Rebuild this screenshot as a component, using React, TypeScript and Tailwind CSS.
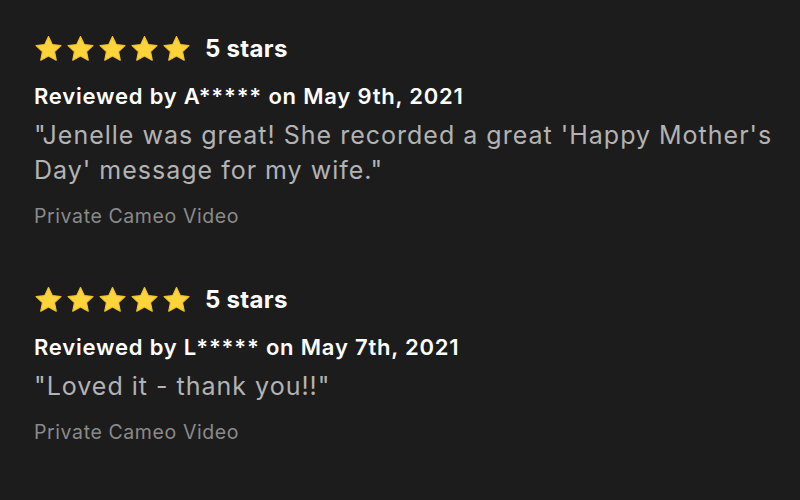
import { Fragment } from "react";

type Review = {
  rating: number;
  author: string;
  date: string;
  text: string;
  kind: string;
};

const reviews: Review[] = [
  {
    rating: 5,
    author: "A*****",
    date: "May 9th, 2021",
    text: "\"Jenelle was great! She recorded a great 'Happy Mother's Day' message for my wife.\"",
    kind: "Private Cameo Video",
  },
  {
    rating: 5,
    author: "L*****",
    date: "May 7th, 2021",
    text: "\"Loved it - thank you!!\"",
    kind: "Private Cameo Video",
  },
];

function Star() {
  return (
    <svg width="29" height="28" viewBox="0 0 24 23" className="shrink-0">
      <path
        d="M12 1.2l3.1 6.6 7.2.9-5.3 5 1.4 7.1L12 17.3l-6.4 3.5 1.4-7.1-5.3-5 7.2-.9z"
        fill="#ffd43b"
        stroke="#f2c12e"
        strokeWidth="1"
        strokeLinejoin="round"
      />
    </svg>
  );
}

export default function App() {
  return (
    <div
      className="w-[800px] h-[500px] bg-[#1c1c1c] pl-[34px] pt-[35px] overflow-hidden"
      style={{ fontFamily: "Inter, 'Open Sans', sans-serif" }}
    >
      {reviews.map((r, i) => (
        <Fragment key={i}>
          <div className={i > 0 ? "mt-[58px]" : ""}>
            <div className="flex items-center h-[28px]">
              <div className="flex gap-[3px]">
                {Array.from({ length: r.rating }).map((_, j) => (
                  <Star key={j} />
                ))}
              </div>
              <span className="ml-[14px] text-[24px] font-bold text-white leading-none tracking-[0.3px]">
                {r.rating} stars
              </span>
            </div>
            <p className="mt-[19px] text-[22px] font-semibold text-white leading-[28px] tracking-[0.8px]">
              Reviewed by {r.author} on {r.date}
            </p>
            <p className="mt-[8px] w-[750px] text-[25px] text-[#b3b3b3] leading-[35px] tracking-[1px]">
              {r.text}
            </p>
            <p className="mt-[16px] text-[19.5px] text-[#8a8a8a] leading-[24px] tracking-[0.6px]">
              {r.kind}
            </p>
          </div>
        </Fragment>
      ))}
    </div>
  );
}
